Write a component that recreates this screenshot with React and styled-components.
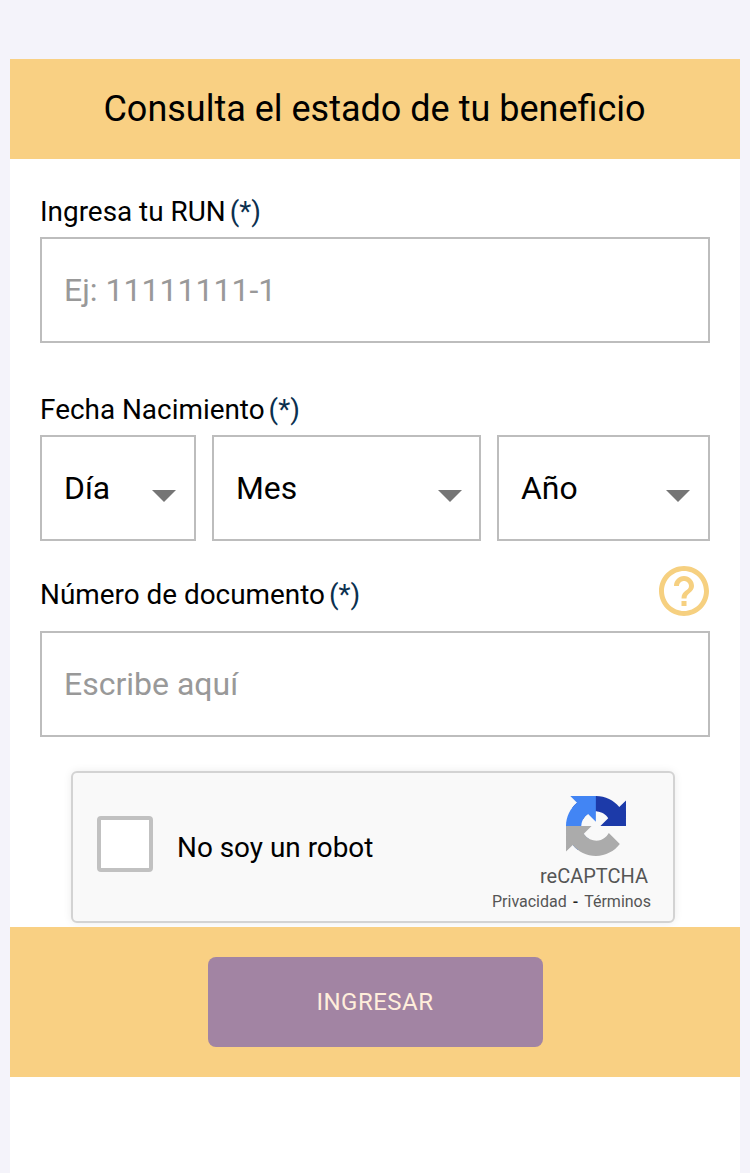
import React from 'react';
import styled, { createGlobalStyle } from 'styled-components';

const GlobalStyle = createGlobalStyle`
  *, *::before, *::after { box-sizing: border-box; }
  body {
    margin: 0;
    background: #f4f3fa;
    color: #000;
    font-family: Roboto, sans-serif;
  }
`;

const Page = styled.div`
  min-height: 1173px;
  padding: 59px 10px 0;
  display: flex;
  flex-direction: column;
`;

const Card = styled.main`
  flex: 1;
  display: flex;
  flex-direction: column;
  background: #fff;
`;

const Header = styled.header`
  height: 100px;
  display: flex;
  align-items: center;
  justify-content: center;
  background: #f9d083;
`;

const Title = styled.h1`
  margin: 0 1px 0 0;
  font-size: 36px;
  line-height: 42px;
  font-weight: 400;
`;

const Form = styled.div`
  height: 768px;
  padding: 37px 30px 0;
  display: flex;
  flex-direction: column;
`;

const Field = styled.div`
  display: flex;
  flex-direction: column;
  gap: ${(p) => p.$gap || 9}px;
  margin-bottom: ${(p) => p.$after}px;
`;

const Label = styled.label`
  display: flex;
  gap: 4px;
  font-size: 27.9px;
  line-height: 32px;
  white-space: nowrap;
`;

const Required = styled.span`
  color: #0b304f;
`;

const TextInput = styled.input`
  width: 100%;
  height: 106px;
  padding: 0 22px;
  border: 2px solid #bdbdbd;
  border-radius: 0;
  background: #fff;
  font: 400 32px/38px Roboto, sans-serif;
  outline: none;

  &::placeholder { color: #999; opacity: 1; }
`;

const DateRow = styled.div`
  display: grid;
  grid-template-columns: 156px 269px 213px;
  gap: 16px;
`;

const SelectBox = styled.button`
  height: 106px;
  padding: 0 ${(p) => p.$inset}px 0 22px;
  display: flex;
  align-items: center;
  justify-content: space-between;
  border: 2px solid #bdbdbd;
  background: #fff;
  color: #000;
  font: 400 31.9px/38px Roboto, sans-serif;
`;

const Caret = styled.span`
  margin-top: 16px;
  border: 12px solid transparent;
  border-top-color: #757575;
  border-bottom: 0;
`;

const LabelRow = styled.div`
  height: 50px;
  padding-right: 1px;
  display: flex;
  align-items: flex-start;
  justify-content: space-between;

  ${Label} { margin-top: 13px; }
`;

const HelpIcon = styled.svg`
  width: 50px;
  height: 50px;
  fill: #f6d080;
`;

const Captcha = styled.div`
  width: 604px;
  height: 152px;
  margin-left: 31px;
  padding: 0 22px 0 24px;
  display: flex;
  align-items: flex-start;
  border: 2px solid #d3d3d3;
  border-radius: 6px;
  background: #f9f9f9;
  box-shadow: 0 0 8px rgba(0, 0, 0, 0.08);
`;

const Checkbox = styled.span`
  width: 56px;
  height: 56px;
  margin-top: 43px;
  border: 4px solid #c1c1c1;
  border-radius: 4px;
  background: #fff;
`;

const CaptchaText = styled.span`
  margin: 59px auto 0 24px;
  font-size: 27.9px;
  line-height: 32px;
`;

const Brand = styled.div`
  padding-top: 22.5px;
  display: flex;
  flex-direction: column;
  align-items: flex-end;
  color: #555;
`;

const Logo = styled.svg`
  width: 60px;
  height: 60px;
  margin-right: 25.5px;
`;

const BrandName = styled.span`
  margin: 8.5px 3px 0 0;
  font-size: 20px;
  line-height: 24px;
`;

const Legal = styled.span`
  display: flex;
  gap: 6px;
  margin-top: 4px;
  font-size: 16px;
  line-height: 20px;
`;

const Dash = styled.span`
  color: #222;
  font-weight: 500;
`;

const Footer = styled.footer`
  height: 150px;
  display: flex;
  align-items: center;
  justify-content: center;
  background: #f9d083;
`;

const SubmitButton = styled.button`
  width: 335px;
  height: 90px;
  margin-left: 1px;
  padding: 0 1px 0 0;
  border: 0;
  border-radius: 8px;
  background: #a284a3;
  color: #ffeedb;
  font: 400 24px/28px Roboto, sans-serif;
  letter-spacing: 0.5px;
`;

const FieldLabel = ({ children }) => (
  <Label>
    {children}
    <Required>(*)</Required>
  </Label>
);

const Select = ({ children, inset = 18 }) => (
  <SelectBox type="button" $inset={inset}>
    {children}
    <Caret />
  </SelectBox>
);

export default function App() {
  return (
    <Page>
      <GlobalStyle />
      <Card>
        <Header>
          <Title>Consulta el estado de tu beneficio</Title>
        </Header>
        <Form>
          <Field $after={51}>
            <FieldLabel>Ingresa tu RUN</FieldLabel>
            <TextInput placeholder="Ej: 11111111-1" />
          </Field>
          <Field $after={25}>
            <FieldLabel>Fecha Nacimiento</FieldLabel>
            <DateRow>
              <Select>Día</Select>
              <Select inset={17}>Mes</Select>
              <Select>Año</Select>
            </DateRow>
          </Field>
          <Field $gap={15} $after={34}>
            <LabelRow>
              <FieldLabel>Número de documento</FieldLabel>
              <HelpIcon viewBox="2 2 20 20">
                <path d="M11 18h2v-2h-2v2zm1-16C6.48 2 2 6.48 2 12s4.48 10 10 10 10-4.48 10-10S17.52 2 12 2zm0 18c-4.41 0-8-3.59-8-8s3.59-8 8-8 8 3.59 8 8-3.59 8-8 8zm0-14c-2.21 0-4 1.79-4 4h2c0-1.1.9-2 2-2s2 .9 2 2c0 2-3 1.75-3 5h2c0-2.25 3-2.5 3-5 0-2.21-1.79-4-4-4z" />
              </HelpIcon>
            </LabelRow>
            <TextInput placeholder="Escribe aquí" />
          </Field>
          <Captcha>
            <Checkbox />
            <CaptchaText>No soy un robot</CaptchaText>
            <Brand>
              <Logo viewBox="0 0 64 64">
                <path fill="#1c3aa9" d="M64 31.955l-.033-1.37V4.687l-7.16 7.16C50.948 4.674 42.033.093 32.05.093c-10.4 0-19.622 4.96-25.458 12.64l11.736 11.86a15.55 15.55 0 0 1 4.754-5.334c2.05-1.6 4.952-2.906 8.968-2.906.485 0 .86.057 1.135.163 4.976.393 9.288 3.14 11.828 7.124l-8.307 8.307L64 31.953" />
                <path fill="#4285f4" d="M31.862.094l-1.37.033H4.594l7.16 7.16C4.58 13.147 0 22.06 0 32.046c0 10.4 4.96 19.622 12.64 25.458L24.5 45.768a15.55 15.55 0 0 1-5.334-4.754c-1.6-2.05-2.906-4.952-2.906-8.968 0-.485.057-.86.163-1.135.393-4.976 3.14-9.288 7.124-11.828l8.307 8.307L31.86.095" />
                <path fill="#ababab" d="M.001 32.045l.033 1.37v25.898l7.16-7.16c5.86 7.173 14.774 11.754 24.76 11.754 10.4 0 19.622-4.96 25.458-12.64l-11.736-11.86a15.55 15.55 0 0 1-4.754 5.334c-2.05 1.6-4.952 2.906-8.968 2.906-.485 0-.86-.057-1.135-.163-4.976-.393-9.288-3.14-11.828-7.124l8.307-8.307c-10.522.04-22.4.066-27.295-.005" />
              </Logo>
              <BrandName>reCAPTCHA</BrandName>
              <Legal>
                <span>Privacidad</span>
                <Dash>-</Dash>
                <span>Términos</span>
              </Legal>
            </Brand>
          </Captcha>
        </Form>
        <Footer>
          <SubmitButton>INGRESAR</SubmitButton>
        </Footer>
      </Card>
    </Page>
  );
}
